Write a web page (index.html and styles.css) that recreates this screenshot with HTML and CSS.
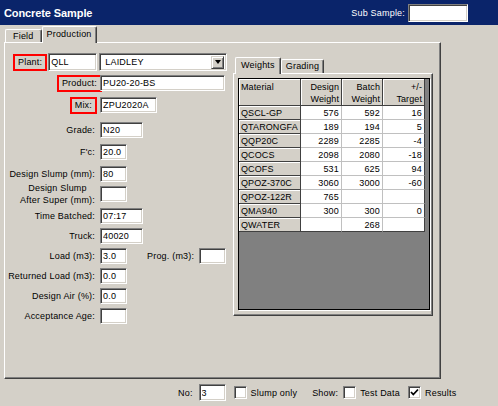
FILE: index.html
```html
<!DOCTYPE html>
<html lang="en">
<head>
    <meta charset="UTF-8">
    <meta name="viewport" content="width=device-width, initial-scale=1.0">
    <title>Concrete Sample</title>
    <link rel="stylesheet" href="styles.css">
</head>
<body>
    <div class="window">
        <header class="titlebar">
            <h1>Concrete Sample</h1>
            <label class="sub-sample">Sub Sample: <input type="text" class="w60 h18"></label>
        </header>

        <nav class="tabs">
            <span class="tab">Field</span>
            <span class="tab active">Production</span>
        </nav>

        <div class="panel">
            <section class="form">
                <div class="row plant-row">
                    <span class="flag">Plant:</span>
                    <input type="text" class="w49 h18" value="QLL">
                    <div class="combo">
                        <span>LAIDLEY</span>
                        <span class="drop"></span>
                    </div>
                </div>
                <div class="row">
                    <span class="label tight"><span class="flag">Product:</span></span>
                    <input type="text" class="w125" value="PU20-20-BS">
                </div>
                <div class="row loose">
                    <span class="label"><span class="flag">Mix:</span></span>
                    <input type="text" class="w57" value="ZPU2020A">
                </div>
                <div class="row group">
                    <span class="label">Grade:</span>
                    <input type="text" class="w43" value="N20">
                </div>
                <div class="row loose">
                    <span class="label">F'c:</span>
                    <input type="text" class="w27" value="20.0">
                </div>
                <div class="row loose">
                    <span class="label">Design Slump (mm):</span>
                    <input type="text" class="w27" value="80">
                </div>
                <div class="row">
                    <span class="label"><span class="two-line">Design Slump<br>After Super (mm):</span></span>
                    <input type="text" class="w27">
                </div>
                <div class="row loose">
                    <span class="label">Time Batched:</span>
                    <input type="text" class="w43" value="07:17">
                </div>
                <div class="row">
                    <span class="label">Truck:</span>
                    <input type="text" class="w43" value="40020">
                </div>
                <div class="row">
                    <span class="label">Load (m3):</span>
                    <input type="text" class="w27" value="3.0">
                    <span class="prog">Prog. (m3):</span>
                    <input type="text" class="w27">
                </div>
                <div class="row">
                    <span class="label">Returned Load (m3):</span>
                    <input type="text" class="w27" value="0.0">
                </div>
                <div class="row">
                    <span class="label">Design Air (%):</span>
                    <input type="text" class="w27" value="0.0">
                </div>
                <div class="row">
                    <span class="label">Acceptance Age:</span>
                    <input type="text" class="w27">
                </div>
            </section>

            <section class="weights">
                <nav class="tabs small">
                    <span class="tab active">Weights</span>
                    <span class="tab">Grading</span>
                </nav>
                <div class="inner-panel">
                    <div class="grid">
                        <table>
                            <colgroup>
                                <col style="width: 62px">
                                <col style="width: 41px">
                                <col style="width: 41px">
                                <col style="width: 42px">
                            </colgroup>
                            <thead>
                                <tr>
                                    <th class="mat">Material</th>
                                    <th>Design<br>Weight</th>
                                    <th>Batch<br>Weight</th>
                                    <th>+/-<br>Target</th>
                                </tr>
                            </thead>
                            <tbody>
                                <tr><th>QSCL-GP</th><td>576</td><td>592</td><td>16</td></tr>
                                <tr><th>QTARONGFA</th><td>189</td><td>194</td><td>5</td></tr>
                                <tr><th>QQP20C</th><td>2289</td><td>2285</td><td>-4</td></tr>
                                <tr><th>QCOCS</th><td>2098</td><td>2080</td><td>-18</td></tr>
                                <tr><th>QCOFS</th><td>531</td><td>625</td><td>94</td></tr>
                                <tr><th>QPOZ-370C</th><td>3060</td><td>3000</td><td>-60</td></tr>
                                <tr><th>QPOZ-122R</th><td>765</td><td></td><td></td></tr>
                                <tr><th>QMA940</th><td>300</td><td>300</td><td>0</td></tr>
                                <tr><th>QWATER</th><td></td><td>268</td><td></td></tr>
                            </tbody>
                        </table>
                    </div>
                </div>
            </section>
        </div>

        <footer class="statusbar">
            <label class="no">No: <input type="text" class="w27 h17" value="3"></label>
            <label class="check"><span class="box"></span>Slump only</label>
            <span class="show">Show:</span>
            <label class="check"><span class="box"></span>Test Data</label>
            <label class="check results">
                <span class="box">
                    <svg width="11" height="11" viewBox="0 0 11 11"><path d="M2 5 L4.3 7.5 L9 2.5" fill="none" stroke="#000" stroke-width="1.8"/></svg>
                </span>Results
            </label>
        </footer>
    </div>
</body>
</html>
```

FILE: styles.css
```css
body {
    margin: 0;
    font-family: "Liberation Sans", Arial, sans-serif;
    font-size: 9px;
    letter-spacing: 0.2px;
    color: #000;
    background-color: #d4d0c8;
}

.window {
    width: 498px;
    height: 406px;
    display: flex;
    flex-direction: column;
    overflow: hidden;
}

/* title bar */
.titlebar {
    flex: none;
    height: 25px;
    display: flex;
    align-items: center;
    justify-content: space-between;
    padding: 0 30px 0 4px;
    background-color: #0a246a;
    color: #fff;
}

.titlebar h1 {
    margin: 0;
    font-size: 11px;
    font-weight: bold;
    letter-spacing: -0.1px;
}

.sub-sample {
    display: flex;
    align-items: center;
    gap: 3px;
}

/* inputs */
input {
    box-sizing: border-box;
    height: 16px;
    margin: 0;
    padding: 0 2px;
    font: inherit;
    letter-spacing: inherit;
    color: #000;
    background-color: #fff;
    border: 1px solid;
    border-color: #808080 #fff #fff #808080;
    box-shadow: inset 1px 1px 0 #404040, inset -1px -1px 0 #d4d0c8;
    outline: none;
}

.h17 { height: 17px; }
.h18 { height: 18px; }
.w27 { width: 27px; }
.w43 { width: 43px; }
.w49 { width: 49px; }
.w57 { width: 57px; }
.w60 { width: 60px; }
.w125 { width: 125px; }

/* tabs */
.tabs {
    flex: none;
    display: flex;
    align-items: flex-end;
    height: 17px;
    padding-left: 5px;
}

.tab {
    box-sizing: border-box;
    height: 13px;
    padding: 0 7px;
    line-height: 12px;
    border: 1px solid;
    border-color: #fff #404040 transparent #fff;
    border-bottom: none;
    border-radius: 2px 2px 0 0;
    box-shadow: inset -1px 0 0 #808080;
}

.tab.active {
    position: relative;
    height: 17px;
    margin-bottom: -1px;
    padding: 0 4px;
    line-height: 14px;
    background-color: #d4d0c8;
}

.panel {
    box-sizing: border-box;
    width: 437px;
    height: 337px;
    margin-left: 4px;
    display: flex;
    border: 1px solid;
    border-color: #fff #404040 #404040 #fff;
    box-shadow: inset -1px -1px 0 #808080;
}

/* left form */
.form {
    width: 228px;
    flex: none;
    display: flex;
    flex-direction: column;
    padding-top: 10px;
}

.row {
    display: flex;
    align-items: center;
    height: 16px;
}

.row + .row { margin-top: 4px; }
.row.loose { margin-top: 6px; }
.row.group { margin-top: 9px; }

.plant-row {
    height: 18px;
    padding-left: 10px;
}

.label {
    width: 90px;
    margin-right: 5px;
    text-align: right;
    line-height: 12px;
    white-space: nowrap;
}

.label.tight {
    width: 95px;
    margin-right: 0;
}

.two-line {
    display: inline-block;
    text-align: center;
}

.flag {
    display: inline-block;
    padding: 0 3px;
    line-height: 13px;
    outline: 2px solid #f00;
}

.plant-row .flag { margin-right: 3px; }

.prog {
    margin: 0 5px 0 20px;
}

.combo {
    box-sizing: border-box;
    width: 128px;
    height: 18px;
    margin-left: 2px;
    display: flex;
    align-items: center;
    justify-content: space-between;
    padding: 0 2px 0 5px;
    background-color: #fff;
    border: 1px solid;
    border-color: #808080 #fff #fff #808080;
    box-shadow: inset 1px 1px 0 #404040, inset -1px -1px 0 #d4d0c8;
}

.drop {
    box-sizing: border-box;
    width: 13px;
    height: 13px;
    display: flex;
    align-items: center;
    justify-content: center;
    background-color: #d4d0c8;
    border: 1px solid;
    border-color: #d4d0c8 #404040 #404040 #d4d0c8;
    box-shadow: inset 1px 1px 0 #fff, inset -1px -1px 0 #808080;
}

.drop::after {
    content: "";
    border-style: solid;
    border-width: 4px 3.5px 0;
    border-color: #000 transparent transparent;
}

/* weights grid */
.weights {
    width: 200px;
    flex: none;
    margin-top: 14px;
    display: flex;
    flex-direction: column;
}

.tabs.small {
    height: 16px;
    padding-left: 2px;
}

.tabs.small .tab {
    height: 14px;
    padding: 0 4px;
}

.tabs.small .tab.active {
    height: 17px;
    padding: 0 5px;
}

.inner-panel {
    box-sizing: border-box;
    height: 243px;
    padding: 4px 2px 0 4px;
    border: 1px solid;
    border-color: #fff #404040 #404040 #fff;
    box-shadow: inset -1px -1px 0 #808080;
}

.grid {
    box-sizing: border-box;
    height: 232px;
    background-color: #808080;
    border: 1px solid #000;
    box-shadow: 1px 1px 0 #fff;
}

.grid table {
    width: 186px;
    table-layout: fixed;
    border-collapse: separate;
    border-spacing: 0;
}

.grid th,
.grid td {
    box-sizing: border-box;
    height: 14px;
    padding: 0 2px;
    line-height: 12px;
    font-weight: normal;
    white-space: nowrap;
    overflow: hidden;
}

.grid th {
    text-align: left;
    letter-spacing: 0.1px;
    background-color: #d4d0c8;
    border-right: 1px solid #404040;
    border-bottom: 1px solid #404040;
    box-shadow: inset 1px 1px 0 #fff;
}

.grid tbody th {
    padding-right: 0;
}

.grid thead th {
    height: 26px;
    padding-top: 2px;
    vertical-align: top;
    text-align: right;
}

.grid thead th.mat {
    text-align: left;
}

.grid td {
    text-align: right;
    background-color: #fff;
    border-right: 1px solid #c0c0c0;
    border-bottom: 1px solid #c0c0c0;
}

.grid td:last-child {
    border-right-color: #404040;
}

.grid tbody tr:last-child td {
    border-bottom-color: #404040;
}

/* bottom bar */
.statusbar {
    flex: 1;
    display: flex;
    align-items: center;
    padding-left: 178px;
}

.no {
    display: flex;
    align-items: center;
    gap: 6px;
    margin-right: 8px;
}

.check {
    display: flex;
    align-items: center;
    gap: 4px;
}

.box {
    box-sizing: border-box;
    width: 13px;
    height: 13px;
    display: flex;
    align-items: center;
    justify-content: center;
    background-color: #fff;
    border: 1px solid;
    border-color: #808080 #fff #fff #808080;
    box-shadow: inset 1px 1px 0 #404040, inset -1px -1px 0 #d4d0c8;
}

.show {
    margin: 0 5px 0 15px;
}

.results {
    margin-left: 8px;
}
```
